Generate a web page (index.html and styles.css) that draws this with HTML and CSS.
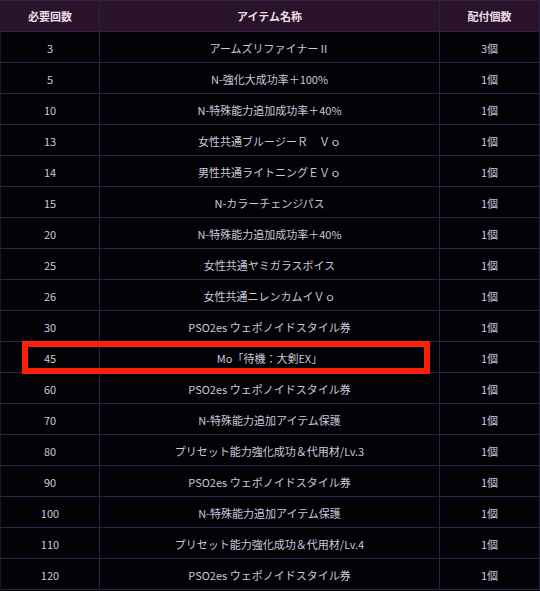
FILE: index.html
```html
<!DOCTYPE html>
<html lang="ja">
<head>
<meta charset="utf-8">
<link rel="stylesheet" href="styles.css">
</head>
<body>
<div class="sheet">
  <div class="row head"><div class="c">必要回数</div><div class="c">アイテム名称</div><div class="c">配付個数</div></div>
  <div class="row"><div class="c">3</div><div class="c">アームズリファイナーⅡ</div><div class="c">3個</div></div>
  <div class="row"><div class="c">5</div><div class="c">N-強化大成功率＋100%</div><div class="c">1個</div></div>
  <div class="row"><div class="c">10</div><div class="c">N-特殊能力追加成功率＋40%</div><div class="c">1個</div></div>
  <div class="row"><div class="c">13</div><div class="c">女性共通ブルージーＲ　Ｖｏ</div><div class="c">1個</div></div>
  <div class="row"><div class="c">14</div><div class="c">男性共通ライトニングＥＶｏ</div><div class="c">1個</div></div>
  <div class="row"><div class="c">15</div><div class="c">N-カラーチェンジパス</div><div class="c">1個</div></div>
  <div class="row"><div class="c">20</div><div class="c">N-特殊能力追加成功率＋40%</div><div class="c">1個</div></div>
  <div class="row"><div class="c">25</div><div class="c">女性共通ヤミガラスボイス</div><div class="c">1個</div></div>
  <div class="row"><div class="c">26</div><div class="c">女性共通ニレンカムイＶｏ</div><div class="c">1個</div></div>
  <div class="row"><div class="c">30</div><div class="c">PSO2es ウェポノイドスタイル券</div><div class="c">1個</div></div>
  <div class="row"><div class="c">45</div><div class="c">Mo「待機：大剣EX」</div><div class="c">1個</div></div>
  <div class="row"><div class="c">60</div><div class="c">PSO2es ウェポノイドスタイル券</div><div class="c">1個</div></div>
  <div class="row"><div class="c">70</div><div class="c">N-特殊能力追加アイテム保護</div><div class="c">1個</div></div>
  <div class="row"><div class="c">80</div><div class="c">プリセット能力強化成功＆代用材/Lv.3</div><div class="c">1個</div></div>
  <div class="row"><div class="c">90</div><div class="c">PSO2es ウェポノイドスタイル券</div><div class="c">1個</div></div>
  <div class="row"><div class="c">100</div><div class="c">N-特殊能力追加アイテム保護</div><div class="c">1個</div></div>
  <div class="row"><div class="c">110</div><div class="c">プリセット能力強化成功＆代用材/Lv.4</div><div class="c">1個</div></div>
  <div class="row"><div class="c">120</div><div class="c">PSO2es ウェポノイドスタイル券</div><div class="c">1個</div></div>
  <div class="mark"></div>
</div>
</body>
</html>
```
FILE: styles.css
```css
html, body {
  margin: 0;
  padding: 0;
  background: #020106;
}
.sheet {
  position: relative;
  width: 540px;
  border-top: 1px solid #26244a;
  font-family: "Noto Sans CJK JP", "Noto Sans", sans-serif;
  font-size: 11px;
  color: #cbc9da;
}
.row {
  display: grid;
  grid-template-columns: 99px 340px 1fr;
  height: 31px;
  box-sizing: border-box;
  border-bottom: 1px solid #26244a;
  border-left: 1px solid #1a1830;
}
.c {
  display: flex;
  align-items: center;
  justify-content: center;
  border-right: 1px solid #26244a;
  padding-top: 2px;
  white-space: nowrap;
}
.head {
  background: #2a1228;
  color: #eadfea;
  font-weight: bold;
}
.head .c {
  padding-top: 0;
}
.mark {
  position: absolute;
  left: 22px;
  top: 340px;
  width: 408px;
  height: 33px;
  box-sizing: border-box;
  border: 6px solid #fb2108;
}
```
